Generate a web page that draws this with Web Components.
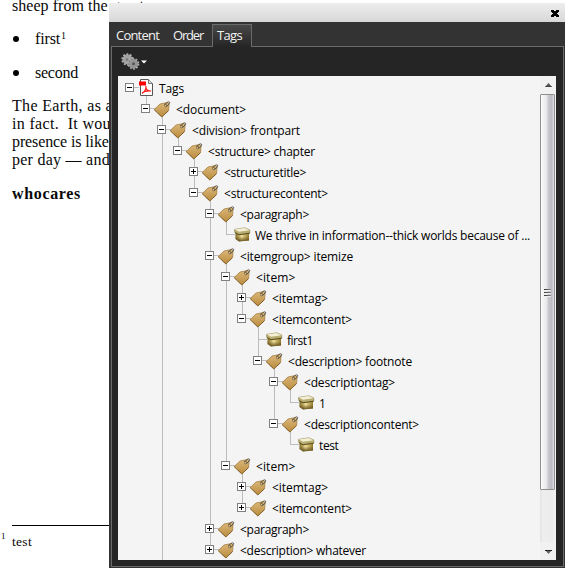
<!DOCTYPE html>
<html lang="en">
<head>
<meta charset="utf-8">
<title>Tags panel</title>
<style>
html,body{margin:0;height:100%;overflow:hidden;background:#fff}
</style>
</head>
<body>
<app-stage>
  <paper-page slot="page"></paper-page>
  <tags-panel>
    <tree-node kind="pdf" label="Tags" w="25" root>
      <tree-node label="&lt;document&gt;" w="70">
        <tree-node label="&lt;division&gt; frontpart" w="108" more>
          <tree-node label="&lt;structure&gt; chapter" w="107">
            <tree-node label="&lt;structuretitle&gt;" w="82" closed></tree-node>
            <tree-node label="&lt;structurecontent&gt;" w="104">
              <tree-node label="&lt;paragraph&gt;" w="69">
                <tree-node kind="box" label="We thrive in information--thick worlds because of ..." w="275"></tree-node>
              </tree-node>
              <tree-node label="&lt;itemgroup&gt; itemize" w="113">
                <tree-node label="&lt;item&gt;" w="39.5">
                  <tree-node label="&lt;itemtag&gt;" w="56" closed></tree-node>
                  <tree-node label="&lt;itemcontent&gt;" w="80">
                    <tree-node kind="box" label="first1" w="26"></tree-node>
                    <tree-node label="&lt;description&gt; footnote" w="124">
                      <tree-node label="&lt;descriptiontag&gt;" w="91">
                        <tree-node kind="box" label="1" w="6"></tree-node>
                      </tree-node>
                      <tree-node label="&lt;descriptioncontent&gt;" w="115">
                        <tree-node kind="box" label="test" w="19.5"></tree-node>
                      </tree-node>
                    </tree-node>
                  </tree-node>
                </tree-node>
                <tree-node label="&lt;item&gt;" w="39.5">
                  <tree-node label="&lt;itemtag&gt;" w="56" closed></tree-node>
                  <tree-node label="&lt;itemcontent&gt;" w="80" closed></tree-node>
                </tree-node>
              </tree-node>
              <tree-node label="&lt;paragraph&gt;" w="69" closed></tree-node>
              <tree-node label="&lt;description&gt; whatever" w="126" closed></tree-node>
            </tree-node>
          </tree-node>
        </tree-node>
      </tree-node>
    </tree-node>
  </tags-panel>
</app-stage>
<script>
const define = (name, html, setup) => customElements.define(name, class extends HTMLElement {
  connectedCallback() {
    if (this.shadowRoot) return;
    this.attachShadow({mode: 'open'}).innerHTML = html;
    if (setup) setup(this, this.shadowRoot);
  }
});

/* Text tracked to occupy a given advance width. */
define('fit-text', `<style>:host{display:inline-block;white-space:pre}span{display:inline-block}</style><span></span>`, (el, root) => {
  const s = root.querySelector('span');
  s.textContent = el.getAttribute('text');
  const w = +el.getAttribute('w');
  if (w) s.style.letterSpacing = ((w - s.getBoundingClientRect().width) / s.textContent.length) + 'px';
});

define('app-stage', `<style>
:host{display:grid;grid-template-columns:568px;grid-template-rows:570px;overflow:hidden}
::slotted(*){grid-area:1/1}
</style><slot name="page"></slot><slot></slot>`);

define('paper-page', `<style>
:host{display:flex;flex-direction:column;box-sizing:border-box;padding-left:12px;width:160px;height:570px;overflow:hidden;font:16px/18px "Liberation Serif",serif;color:#080808}
.li{display:grid;grid-template-columns:23px auto;justify-content:start;height:18px}
.dot{width:6px;height:6px;border-radius:50%;background:#000;margin:6px 0 0 1px}
sup{font-size:10px;line-height:0;vertical-align:5px;margin-left:1px}
.a{margin-top:-3px}.b{margin-top:15px}.c{margin-top:16px}.d{margin-top:15px}
b{margin-top:16px}
hr{width:140px;height:1px;background:#000;border:0;margin:322px 0 0}
.n{font-size:9px;line-height:10px;margin:5px 0 0 -11px}
.t{font-size:13.5px;line-height:14px;margin-top:-6px}
</style>
<div class="a"><fit-text text="sheep from the great" w="132"></fit-text></div>
<div class="li b"><i class="dot"></i><span><fit-text text="first" w="25"></fit-text><sup>1</sup></span></div>
<div class="li c"><i class="dot"></i><fit-text text="second" w="43"></fit-text></div>
<div class="d"><fit-text text="The Earth, as a" w="101"></fit-text></div>
<div><fit-text text="in fact.  It would" w="112"></fit-text></div>
<div><fit-text text="presence is likely" w="109"></fit-text></div>
<div><fit-text text="per day — and" w="98"></fit-text></div>
<b><fit-text text="whocares" w="69"></fit-text></b>
<hr>
<div class="n">1</div>
<div class="t"><fit-text text="test" w="20"></fit-text></div>`);

define('tab-button', `<style>
:host{display:block;box-sizing:border-box;height:22px;font:13px/20px "Open Sans",sans-serif;color:#f2f2f2;border:1px solid transparent;border-bottom:0;padding-left:4px}
:host([selected]){height:23px;background:linear-gradient(#484848,#252525);border-color:#6a6a6a}
</style><fit-text></fit-text>`, (el, root) => {
  const old = root.querySelector('fit-text'), f = document.createElement('fit-text');
  f.setAttribute('text', el.getAttribute('label'));
  f.setAttribute('w', el.getAttribute('w'));
  old.replaceWith(f);
});

define('gear-icon', `<style>:host{display:block;width:26px;height:19px}svg{display:block}</style>
<svg width="26" height="19" viewBox="0 0 26 19">
<circle cx="6.5" cy="6.5" r="5" fill="#a2a2a2"/><circle cx="6.5" cy="6.5" r="5.3" fill="none" stroke="#b0b0b0" stroke-width="1.8" stroke-dasharray="1.8 1.53"/>
<circle cx="12.5" cy="10.8" r="4.8" fill="#959595" stroke="#555" stroke-width=".6"/><circle cx="12.5" cy="10.8" r="5" fill="none" stroke="#aaa" stroke-width="1.8" stroke-dasharray="1.7 1.44"/>
<circle cx="6" cy="6.5" r="1.3" fill="#777"/><circle cx="12.5" cy="10.8" r="1.5" fill="#555"/>
<path d="M20 7.500h6l-3 3z" fill="#fff"/></svg>`);

define('scroll-bar', `<style>
:host{display:flex;flex-direction:column;align-items:center;box-sizing:border-box;width:16px;height:484px;background:linear-gradient(90deg,#e3e3e3,#eee 3px,#ececec 12px,#f4f4f4);padding-right:1px}
.end{height:18px;width:15px;background:#f1f1f1}
.thumb{box-sizing:border-box;height:396px;width:15px;border:1px solid #8e8e8e;border-radius:1px;background:linear-gradient(90deg,#fff 0,#f4f4f6 2px,#e7e7ea 6px,#c9c9cf 7px,#bcbcc4 11px,#e5e5e8 13px);display:flex;flex-direction:column;align-items:center;justify-content:center;gap:2px}
.thumb i{width:7px;height:1px;background:linear-gradient(90deg,#333,#888);box-shadow:0 1px #eee}
.gap{flex:1}svg{display:block}
</style>
<div class="end"><svg width="15" height="18"><path d="M5 11h7L8.500 7z" fill="#555"/><path d="M5 10.500h7" stroke="#222" opacity=".4"/></svg></div>
<div class="thumb"><i></i><i></i><i></i></div><div class="gap"></div>
<div class="end"><svg width="15" height="18"><path d="M5 8h7l-3.500 4z" fill="#666"/><path d="M5 8.500h7" stroke="#222"/></svg></div>`);

define('tags-panel', `<style>
:host{display:flex;flex-direction:column;box-sizing:border-box;width:456px;height:565px;margin:3px 0 0 109px;background:#333;overflow:hidden;font-family:"Open Sans",sans-serif}
header{height:19px;flex:none;background:linear-gradient(#ededed,#d8d8d8);display:flex;justify-content:flex-end;align-items:center;padding-right:6px;box-sizing:border-box}
nav{display:flex;height:25px;flex:none;padding:2px 0 0 2px;box-sizing:border-box;z-index:1}
.o{margin-left:8px}.t{margin-left:8px;width:40px;box-sizing:border-box}
main{flex:1;box-sizing:border-box;margin:-1px 1px 1px 2px;border:1px solid #6a6a6a;background:#252525;padding:6px 7px 0 6px;display:flex;flex-direction:column;min-height:0}
.tools{height:23px;flex:none;padding-left:3px;box-sizing:border-box}
.view{display:flex;height:484px;width:438px;flex:none;overflow:hidden;background:#f4f4f4}
.tree{flex:1;min-width:0;padding:1px 0 0 7px;overflow:hidden}
</style>
<header><svg width="8" height="8" viewBox="0 0 8 8" shape-rendering="crispEdges"><path d="M0 1h3v1h2V1h3v2H7v1H6v1h1v1h1v2H5V7H3v1H0V6h1V5h1V4H1V3H0z" fill="#000"/></svg></header>
<nav><tab-button label="Content" w="43" class="c"></tab-button><tab-button class="o" label="Order" w="30"></tab-button><tab-button class="t" selected label="Tags" w="25"></tab-button></nav>
<main><div class="tools"><gear-icon></gear-icon></div><div class="view"><div class="tree"><slot></slot></div><scroll-bar></scroll-bar></div></main>`);

const icons = {
  tag: `<svg width="17" height="17" viewBox="0 0 17 17"><defs><linearGradient id="g" x1="0" y1="0" x2="0" y2="1"><stop offset="0" stop-color="#dcb97c"/><stop offset="1" stop-color="#b98a3c"/></linearGradient></defs><path d="M.2 8.600 6 3 13.500 1.500 15 3 14.600 9.500 7.900 16z" fill="url(#g)" stroke="#a47d40" stroke-width=".8"/><path d="M.5 9l7.400 7 6.800-6.500" fill="none" stroke="#6b4a18" stroke-dasharray="1 .6"/><circle cx="11.800" cy="4.700" r="1.200" fill="#e8d2a0" stroke="#5f4a28" stroke-width=".7"/><path d="M10.200 3.600 14.200 .8 15.800 1.400 14.500 4 12 5.200" fill="none" stroke="#5d5748"/></svg>`,
  box: `<svg width="17" height="17" viewBox="0 0 17 17"><defs><linearGradient id="g"><stop offset="0" stop-color="#7d6620"/><stop offset=".45" stop-color="#efe09a"/><stop offset="1" stop-color="#927728"/></linearGradient><linearGradient id="s" x1="0" y1="0" x2="0" y2="1"><stop offset=".4" stop-color="#5a4510" stop-opacity="0"/><stop offset="1" stop-color="#4a380c" stop-opacity=".85"/></linearGradient></defs><path d="M1.500 7v6l3.500 2.500 10-1V7z" fill="url(#g)"/><path d="M1.500 7v6l3.500 2.500 10-1V7z" fill="url(#s)"/><path d="M.6 3.400 10.500 1.800 15.800 4v3L5 8.600.6 6.300z" fill="#b8ad70" stroke="#918551" stroke-width=".6"/><path d="M1 3.500l9.400-1.500 5.200 2.200L5 5.800z" fill="#f4f0d5"/><path d="M1 6.500 5 8.800l10.800-1.600" fill="none" stroke="#554717" stroke-width=".9"/></svg>`,
  pdf: `<svg width="17" height="17" viewBox="0 0 17 17"><path d="M2.500.5h8l4 4v12h-12z" fill="#fff" stroke="#555"/><path d="M10.500.5v4h4" fill="#ddd" stroke="#777"/><path d="M1 2.500h7v4H1z" fill="#f00"/><path d="M4 14.500c2-1.200 4-4 4-7.500M7.800 8c.2 2.500 2.700 4 5.400 4M4.200 13.800c2.300-1.800 5-2.300 8.800-1.800" fill="none" stroke="#f11" stroke-width="1.100"/></svg>`
};

/* A row plus its nested child rows; every level is indented by 16px. */
define('tree-node', `<style>
:host{display:block;position:relative;font:12px/21px "Open Sans",sans-serif;color:#000}
.row{display:flex;height:21px;position:relative}
.toggle{box-sizing:border-box;width:9px;height:9px;margin:6px 4px 0 0;border:1px solid #808080;background:#fff;flex:none;position:relative}
.toggle::before{content:"";position:absolute;left:1px;top:3px;width:5px;height:1px;background:#000}
:host([closed]) .toggle::after{content:"";position:absolute;left:3px;top:1px;width:1px;height:5px;background:#000}
:host([kind=box]) .toggle{visibility:hidden}
.icon{width:17px;height:17px;margin:3px 5px 0 0;flex:none}
:host([kind=pdf]) .icon,:host([kind=box]) .icon{margin:2px 4px 0 0}
fit-text{margin-top:1px}
svg{display:block}
.v{position:absolute;left:5px;top:-2px;width:1px;bottom:0;background:#bcbcbc}
:host(:last-child) .v{bottom:auto;height:13px}
:host([more]) .v{bottom:-40px;height:auto}
:host([root]) .v{display:none}
.h{position:absolute;left:5px;top:10px;width:9px;height:1px;background:#bcbcbc}
.kids{margin-left:16px}
</style><i class="v"></i><div class="row"><i class="h"></i><span class="toggle"></span><span class="icon"></span></div><div class="kids"><slot></slot></div>`, (el, root) => {
  root.querySelector('.icon').innerHTML = icons[el.getAttribute('kind') || 'tag'];
  const f = document.createElement('fit-text');
  f.setAttribute('text', el.getAttribute('label'));
  f.setAttribute('w', el.getAttribute('w'));
  root.querySelector('.row').append(f);
});
</script>
</body>
</html>
